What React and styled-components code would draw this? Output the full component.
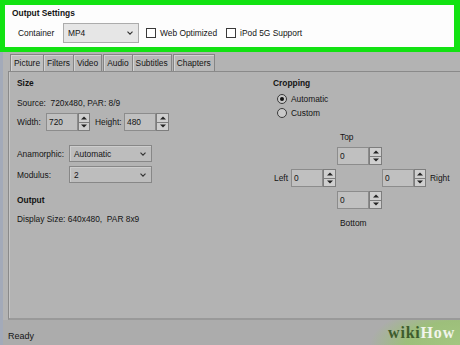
import React from "react";
import styled, { createGlobalStyle } from "styled-components";

const GlobalStyle = createGlobalStyle`
  html, body {
    margin: 0;
    padding: 0;
  }
  body {
    background: #b3b3b3;
    font-family: "Liberation Sans", Arial, sans-serif;
    font-size: 8.4px;
    color: #141414;
    overflow: hidden;
  }
`;

const Window = styled.div`
  position: relative;
  width: 460px;
  height: 345px;
  display: flex;
  flex-direction: column;
  background: #b3b3b3;
  overflow: hidden;
`;

/* ---------- output settings (highlighted) ---------- */

const OutputSettings = styled.section`
  box-sizing: border-box;
  height: 52px;
  flex-shrink: 0;
  border: 5px solid #12e212;
  border-right-width: 6px;
  background: #fdfdfd;
  padding: 2px 0 0 7px;
`;

const GroupTitle = styled.div`
  font-weight: bold;
  line-height: 12px;
  margin-left: ${(p) => p.$indent || 0}px;
`;

const SettingsRow = styled.div`
  display: flex;
  align-items: center;
  margin-top: 4px;
  padding-left: 6px;
`;

const Label = styled.span`
  display: inline-block;
  width: ${(p) => (p.$w ? `${p.$w}px` : "auto")};
  margin-left: ${(p) => p.$ml || 0}px;
  line-height: 12px;
  white-space: nowrap;
`;

const Select = styled.div`
  box-sizing: border-box;
  display: flex;
  align-items: center;
  justify-content: space-between;
  width: ${(p) => p.$w}px;
  height: ${(p) => p.$h}px;
  padding: 0 5px 0 4px;
  border: 1px solid ${(p) => (p.$light ? "#acacac" : "#878787")};
  background: ${(p) => (p.$light ? "#e6e6e6" : "#bdbdbd")};
  box-shadow: ${(p) => (p.$light ? "none" : "inset 1px 1px 0 #cdcdcd")};
  line-height: 12px;
`;

const Chevron = () => (
  <svg width="6" height="4" viewBox="0 0 6 4">
    <path d="M0.5 0.6 L3 3.2 L5.5 0.6" fill="none" stroke="#333" strokeWidth="1.1" />
  </svg>
);

const CheckBox = styled.span`
  box-sizing: border-box;
  width: 10px;
  height: 10px;
  border: 1px solid #3a3a3a;
  background: #fff;
  margin-left: ${(p) => p.$ml}px;
  margin-right: 4px;
`;

/* ---------- tabs ---------- */

const Main = styled.div`
  flex: 1;
  display: flex;
  flex-direction: column;
  min-height: 0;
  border-left: 3px solid #a3aab9;
`;

const TabStrip = styled.div`
  display: flex;
  height: 17px;
  padding: 2px 0 0 7px;
  flex-shrink: 0;
`;

const Tab = styled.div`
  box-sizing: border-box;
  height: 17px;
  padding: 0 3px;
  margin-right: ${(p) => p.$mr || 0}px;
  border: 1px solid #858585;
  border-bottom: none;
  border-left-width: ${(p) => (p.$first ? 1 : 0)}px;
  background: ${(p) => (p.$active ? "#bfbfbf" : "#b8b8b8")};
  box-shadow: inset 1px 1px 0 #d3d3d3;
  line-height: 16px;
  white-space: nowrap;
`;

/* ---------- picture panel ---------- */

const Panel = styled.div`
  flex: 1;
  display: flex;
  margin-left: 5px;
  padding: 5px 0 0 8px;
  border-top: 1px solid #8a8a8a;
  border-left: 1px solid #8a8a8a;
  border-bottom: 2px solid #999;
  box-shadow: inset 1px 0 0 #c6c6c6;
`;

const Column = styled.div`
  display: flex;
  flex-direction: column;
  width: ${(p) => (p.$w ? `${p.$w}px` : "auto")};
  flex-shrink: 0;
`;

const Line = styled.div`
  display: flex;
  align-items: center;
  margin-top: ${(p) => p.$mt || 0}px;
  line-height: 12px;
  white-space: nowrap;
`;

const SpinBox = styled.div`
  display: flex;
  height: 18px;
  margin-left: ${(p) => p.$ml || 0}px;
`;

const SpinField = styled.div`
  box-sizing: border-box;
  width: 32px;
  height: 18px;
  padding-left: 2px;
  border: 1px solid #8c8c8c;
  background: #c0c0c0;
  line-height: 16px;
`;

const SpinButtons = styled.div`
  display: flex;
  flex-direction: column;
  width: ${(p) => p.$w || 12}px;
`;

const SpinButton = styled.div`
  flex: 1;
  display: flex;
  align-items: center;
  justify-content: center;
  border: 1px solid #7d7d7d;
  border-top-width: ${(p) => (p.$down ? 0 : 1)}px;
  background: #cfcfcf;
`;

const Arrow = ({ down }) => (
  <svg width="6" height="4" viewBox="0 0 6 4">
    <path d={down ? "M0 0.5 H6 L3 3.5 Z" : "M0 3.5 H6 L3 0.5 Z"} fill="#222" />
  </svg>
);

const Spinner = ({ value, ml, bw }) => (
  <SpinBox $ml={ml}>
    <SpinField>{value}</SpinField>
    <SpinButtons $w={bw}>
      <SpinButton>
        <Arrow />
      </SpinButton>
      <SpinButton $down>
        <Arrow down />
      </SpinButton>
    </SpinButtons>
  </SpinBox>
);

const Radio = styled.span`
  box-sizing: border-box;
  display: flex;
  align-items: center;
  justify-content: center;
  width: 10px;
  height: 10px;
  margin: 0 4px 0 6px;
  border: 1px solid #3a3a3a;
  border-radius: 50%;
  background: #c9c9c9;

  &::after {
    content: "";
    display: ${(p) => (p.$checked ? "block" : "none")};
    width: 4px;
    height: 4px;
    border-radius: 50%;
    background: #111;
  }
`;

const CropGrid = styled.div`
  display: grid;
  grid-template-columns: 20px 46px 45px 46px auto;
  grid-template-rows: 12px 18px 18px 18px 12px;
  row-gap: 4px;
  margin-top: 12px;
  line-height: 12px;
`;

const CropLabel = styled.span`
  grid-column: ${(p) => p.$col};
  grid-row: ${(p) => p.$row};
  align-self: center;
  justify-self: ${(p) => p.$justify || "start"};
  padding: ${(p) => p.$pad || "0"};
  margin-top: ${(p) => p.$mt || 0}px;
`;

const CropCell = styled.div`
  grid-column: ${(p) => p.$col};
  grid-row: ${(p) => p.$row};
`;

/* ---------- status bar ---------- */

const StatusBar = styled.div`
  height: 25px;
  flex-shrink: 0;
  display: flex;
  align-items: flex-end;
  padding: 0 0 3px 5px;
  box-sizing: border-box;
  background: #acacac;
  font-size: 9px;
  line-height: 12px;
`;

const Watermark = styled.div`
  position: absolute;
  right: 0;
  bottom: 0;
  width: 96px;
  height: 25px;
  display: flex;
  align-items: center;
  justify-content: flex-end;
  padding-right: 5px;
  box-sizing: border-box;
  background: radial-gradient(ellipse 90px 40px at 100% 100%, #a3c680 0%, #9dbf7b 60%, rgba(172, 172, 172, 0) 100%);
  font-family: "Liberation Serif", "DejaVu Serif", serif;
  font-weight: bold;
  font-size: 16px;
  letter-spacing: 0.8px;
`;

const Wiki = styled.span`
  color: #3d5c2c;
`;

const How = styled.span`
  color: #f1f5ec;
`;

export default function App() {
  return (
    <Window>
      <GlobalStyle />
      <OutputSettings>
        <GroupTitle>Output Settings</GroupTitle>
        <SettingsRow>
          <Label $w={45}>Container</Label>
          <Select $w={76} $h={20} $light>
            <span>MP4</span>
            <Chevron />
          </Select>
          <CheckBox $ml={7} />
          <Label>Web Optimized</Label>
          <CheckBox $ml={9} />
          <Label>iPod 5G Support</Label>
        </SettingsRow>
      </OutputSettings>

      <Main>
        <TabStrip>
          <Tab $first $active>Picture</Tab>
          <Tab>Filters</Tab>
          <Tab $mr={1}>Video</Tab>
          <Tab $first>Audio</Tab>
          <Tab $mr={1}>Subtitles</Tab>
          <Tab $first>Chapters</Tab>
        </TabStrip>

        <Panel>
          <Column $w={254}>
            <GroupTitle>Size</GroupTitle>
            <Line $mt={8}>Source:&nbsp;&nbsp;720x480, PAR: 8/9</Line>
            <Line $mt={4}>
              <Label $w={29}>Width:</Label>
              <Spinner value="720" />
              <Label $w={29} $ml={5}>Height:</Label>
              <Spinner value="480" bw={13} />
            </Line>
            <Line $mt={14}>
              <Label $w={52}>Anamorphic:</Label>
              <Select $w={83} $h={17}>
                <span>Automatic</span>
                <Chevron />
              </Select>
            </Line>
            <Line $mt={4}>
              <Label $w={52}>Modulus:</Label>
              <Select $w={83} $h={17}>
                <span>2</span>
                <Chevron />
              </Select>
            </Line>
            <GroupTitle as="div" style={{ marginTop: 11 }}>Output</GroupTitle>
            <Line $mt={7}>Display Size: 640x480,&nbsp;&nbsp;PAR 8x9</Line>
          </Column>

          <Column>
            <GroupTitle $indent={2}>Cropping</GroupTitle>
            <Line $mt={4}>
              <Radio $checked />
              Automatic
            </Line>
            <Line $mt={2}>
              <Radio />
              Custom
            </Line>
            <CropGrid>
              <CropLabel $col={3} $row={1} $pad="0 0 0 3px">Top</CropLabel>
              <CropCell $col={3} $row={2}>
                <Spinner value="0" bw={13} />
              </CropCell>
              <CropLabel $col={1} $row={3} $justify="end" $pad="0 3px 0 0">Left</CropLabel>
              <CropCell $col={2} $row={3}>
                <Spinner value="0" bw={13} />
              </CropCell>
              <CropCell $col={4} $row={3}>
                <Spinner value="0" bw={12} />
              </CropCell>
              <CropLabel $col={5} $row={3} $pad="0 0 0 2px">Right</CropLabel>
              <CropCell $col={3} $row={4}>
                <Spinner value="0" bw={13} />
              </CropCell>
              <CropLabel $col={3} $row={5} $pad="0 0 0 3px" $mt={8}>Bottom</CropLabel>
            </CropGrid>
          </Column>
        </Panel>

        <StatusBar>Ready</StatusBar>
      </Main>

      <Watermark>
        <Wiki>wiki</Wiki>
        <How>How</How>
      </Watermark>
    </Window>
  );
}
